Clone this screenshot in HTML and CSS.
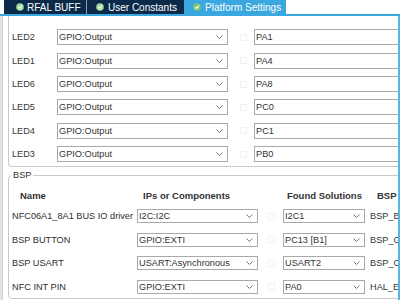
FILE: index.html
```html
<!DOCTYPE html>
<html>
<head>
<meta charset="utf-8">
<link rel="stylesheet" href="styles.css">
</head>
<body>
<div class="app">
  <div class="tabs">
    <div class="tab dark t1"><svg class="ok" viewBox="0 0 8 8"><circle cx="4" cy="4" r="3.8" fill="#a6dc98"/><path d="M2.2 4.1 L3.5 5.4 L5.9 2.7" fill="none" stroke="#ffffff" stroke-width="1.2"/></svg><span>RFAL BUFF</span></div>
    <div class="tab dark t2"><svg class="ok" viewBox="0 0 8 8"><circle cx="4" cy="4" r="3.8" fill="#a6dc98"/><path d="M2.2 4.1 L3.5 5.4 L5.9 2.7" fill="none" stroke="#ffffff" stroke-width="1.2"/></svg><span>User Constants</span></div>
    <div class="tab active t3"><svg class="ok" viewBox="0 0 8 8"><circle cx="4" cy="4" r="3.8" fill="#7cc86c"/><path d="M2.2 4.1 L3.5 5.4 L5.9 2.7" fill="none" stroke="#ffffff" stroke-width="1.2"/></svg><span>Platform Settings</span></div>
  </div>
  <div class="main">
    <div class="strip"></div>
    <div class="panel">
      <div class="gpio">
        <div class="row"><span class="lbl">LED2</span><div class="sel"><span>GPIO:Output</span><svg class="chev" viewBox="0 0 7 4"><polyline points="0.5,0.5 3.5,3.5 6.5,0.5"/></svg></div><span class="chk"></span><div class="inp">PA1</div></div>
        <div class="row"><span class="lbl">LED1</span><div class="sel"><span>GPIO:Output</span><svg class="chev" viewBox="0 0 7 4"><polyline points="0.5,0.5 3.5,3.5 6.5,0.5"/></svg></div><span class="chk"></span><div class="inp">PA4</div></div>
        <div class="row"><span class="lbl">LED6</span><div class="sel"><span>GPIO:Output</span><svg class="chev" viewBox="0 0 7 4"><polyline points="0.5,0.5 3.5,3.5 6.5,0.5"/></svg></div><span class="chk"></span><div class="inp">PA8</div></div>
        <div class="row"><span class="lbl">LED5</span><div class="sel"><span>GPIO:Output</span><svg class="chev" viewBox="0 0 7 4"><polyline points="0.5,0.5 3.5,3.5 6.5,0.5"/></svg></div><span class="chk"></span><div class="inp">PC0</div></div>
        <div class="row"><span class="lbl">LED4</span><div class="sel"><span>GPIO:Output</span><svg class="chev" viewBox="0 0 7 4"><polyline points="0.5,0.5 3.5,3.5 6.5,0.5"/></svg></div><span class="chk"></span><div class="inp">PC1</div></div>
        <div class="row"><span class="lbl">LED3</span><div class="sel"><span>GPIO:Output</span><svg class="chev" viewBox="0 0 7 4"><polyline points="0.5,0.5 3.5,3.5 6.5,0.5"/></svg></div><span class="chk"></span><div class="inp">PB0</div></div>
      </div>
      <fieldset class="bsp">
        <legend>BSP</legend>
        <div class="bhead"><span class="h-name">Name</span><span class="h-ips">IPs or Components</span><span class="h-found">Found Solutions</span><span class="h-bsp">BSP API</span></div>
        <div class="brow"><span class="bname">NFC06A1_8A1 BUS IO driver</span><div class="bsel"><span>I2C:I2C</span><svg class="chev" viewBox="0 0 7 4"><polyline points="0.5,0.5 3.5,3.5 6.5,0.5"/></svg></div><span class="chk bchk"></span><div class="fsel"><span>I2C1</span><svg class="chev" viewBox="0 0 7 4"><polyline points="0.5,0.5 3.5,3.5 6.5,0.5"/></svg></div><span class="bval">BSP_BUS_Init</span></div>
        <div class="brow"><span class="bname">BSP BUTTON</span><div class="bsel"><span>GPIO:EXTI</span><svg class="chev" viewBox="0 0 7 4"><polyline points="0.5,0.5 3.5,3.5 6.5,0.5"/></svg></div><span class="chk bchk"></span><div class="fsel"><span>PC13 [B1]</span><svg class="chev" viewBox="0 0 7 4"><polyline points="0.5,0.5 3.5,3.5 6.5,0.5"/></svg></div><span class="bval">BSP_GPIO</span></div>
        <div class="brow"><span class="bname">BSP USART</span><div class="bsel"><span>USART:Asynchronous</span><svg class="chev" viewBox="0 0 7 4"><polyline points="0.5,0.5 3.5,3.5 6.5,0.5"/></svg></div><span class="chk bchk"></span><div class="fsel"><span>USART2</span><svg class="chev" viewBox="0 0 7 4"><polyline points="0.5,0.5 3.5,3.5 6.5,0.5"/></svg></div><span class="bval">BSP_COM</span></div>
        <div class="brow"><span class="bname">NFC INT PIN</span><div class="bsel"><span>GPIO:EXTI</span><svg class="chev" viewBox="0 0 7 4"><polyline points="0.5,0.5 3.5,3.5 6.5,0.5"/></svg></div><span class="chk bchk"></span><div class="fsel"><span>PA0</span><svg class="chev" viewBox="0 0 7 4"><polyline points="0.5,0.5 3.5,3.5 6.5,0.5"/></svg></div><span class="bval">HAL_EXTI</span></div>
      </fieldset>
    </div>
  </div>
</div>
</body>
</html>
```

FILE: styles.css
```css
* { box-sizing: border-box; }
html, body { margin: 0; padding: 0; }
body {
  width: 400px;
  height: 300px;
  overflow: hidden;
  background: #ffffff;
  font-family: "Liberation Sans", Arial, sans-serif;
  font-size: 9.2px;
  color: #333333;
}
.app { display: flex; flex-direction: column; height: 300px; }

/* tabs */
.tabs {
  display: flex;
  height: 16px;
  padding-left: 4px;
  border-bottom: 2px solid #3aa8de;
  flex: none;
}
.tab {
  display: flex;
  align-items: center;
  gap: 4px;
  height: 14px;
  color: #ffffff;
  font-size: 10px;
  white-space: nowrap;
  flex: none;
}
.tab.dark { background: #0b2a4a; }
.tab.active { background: #3aa8de; }
.ok { width: 8px; height: 8px; flex: none; }
.t1 { width: 83px; padding-left: 12px; border-right: 1px solid #8c9bb0; gap: 3px; }
.t2 { width: 97px; padding-left: 9px; }
.t3 { width: 102px; padding-left: 9px; }

/* main */
.main { flex: 1; display: flex; min-height: 0; }
.strip { width: 3px; background: #e4e4e4; border-right: 1px solid #d2d2d2; flex: none; }
.panel {
  flex: 1;
  min-width: 0;
  overflow: hidden;
  padding-left: 5px;
  border-right: 2px solid #5cb4e6;
}

.gpio {
  width: 420px;
  padding: 9.6px 0 0 3px;
  border-left: 1px solid #c9c9c9;
  border-bottom: 1px solid #c9c9c9;
  border-bottom-left-radius: 4px;
}
.row { display: flex; align-items: center; height: 23.4px; }
.lbl { width: 45px; flex: none; color: #3a3a3a; }
.sel, .inp, .bsel, .fsel {
  display: flex;
  align-items: center;
  flex: none;
  border: 1px solid #a9a9a9;
  padding-left: 1px;
  white-space: nowrap;
  overflow: hidden;
  color: #333333;
}
.sel { width: 171px; height: 16px; }
.inp { width: 200px; height: 16px; margin-left: 7px; }
.chev {
  width: 7px;
  height: 4px;
  margin-left: auto;
  margin-right: 4px;
  flex: none;
}
.chev polyline { fill: none; stroke: #666666; stroke-width: 0.9; }
.chk {
  width: 7px;
  height: 7px;
  margin-left: 12px;
  border: 1px solid #f2f2f2;
  flex: none;
}

/* BSP */
.bsp {
  width: 420px;
  min-width: 0;
  margin: 3px 0 0 0;
  padding: 5.2px 0 0 3px;
  border: 1px solid #c9c9c9;
  border-radius: 4px;
}
.bsp legend {
  font-size: 9.2px;
  line-height: 11px;
  padding: 0 2px;
  margin-left: -1px;
  color: #333333;
}
.bhead {
  display: flex;
  align-items: center;
  height: 18.6px;
  font-weight: bold;
  font-size: 9.5px;
  color: #333333;
  white-space: nowrap;
}
.h-name { width: 125px; padding-left: 8px; flex: none; }
.h-ips { width: 146px; padding-left: 6px; flex: none; }
.h-found { width: 87px; padding-left: 4px; flex: none; }
.h-bsp { padding-left: 7px; flex: none; }

.brow { display: flex; align-items: center; height: 23.4px; white-space: nowrap; }
.bname { width: 125px; flex: none; color: #2e2e2e; }
.bsel { width: 121px; height: 14px; }
.bchk { margin-left: 10px; }
.fsel { width: 82px; height: 14px; margin-left: 8px; }
.bval { margin-left: 5px; flex: none; color: #333333; }
```
